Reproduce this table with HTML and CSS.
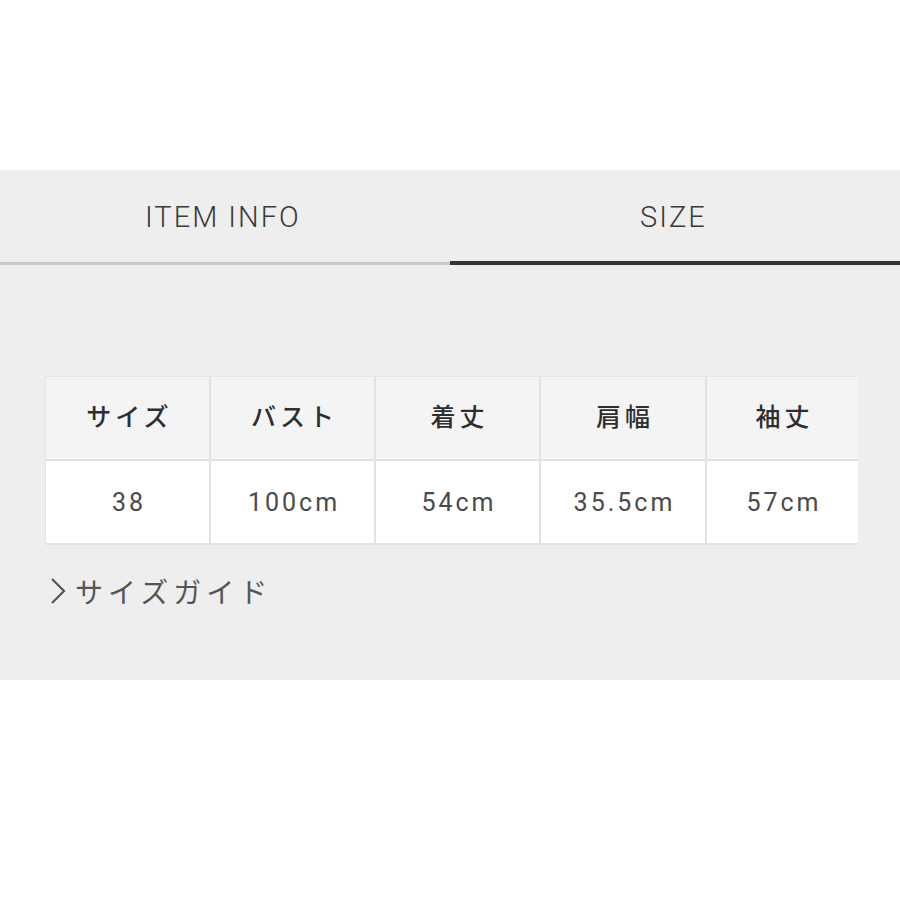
FILE: index.html
```html
<!DOCTYPE html>
<html lang="ja">
<head>
<meta charset="utf-8">
<link rel="stylesheet" href="styles.css">
</head>
<body>
<div class="top"></div>
<section class="panel">
  <div class="tabs">
    <div class="tab">ITEM INFO</div>
    <div class="tab active">SIZE</div>
  </div>
  <div class="content">
    <div class="table">
      <div class="cell head">サイズ</div>
      <div class="cell head">バスト</div>
      <div class="cell head">着丈</div>
      <div class="cell head">肩幅</div>
      <div class="cell head last">袖丈</div>
      <div class="cell data">38</div>
      <div class="cell data">100cm</div>
      <div class="cell data">54cm</div>
      <div class="cell data">35.5cm</div>
      <div class="cell data last">57cm</div>
    </div>
    <a class="guide" href="#"><svg class="chev" width="18" height="28" viewBox="0 0 18 28"><path d="M3 2 L15 14 L3 26" fill="none" stroke="#555" stroke-width="2.2"/></svg><span>サイズガイド</span></a>
  </div>
</section>
</body>
</html>
```
FILE: styles.css
```css
* { box-sizing: border-box; }
body {
  margin: 0;
  background: #fff;
  font-family: Roboto, "Noto Sans CJK JP", sans-serif;
}
.top { height: 170px; }
.panel {
  background: #eeeeee;
  height: 510px;
}
.tabs {
  display: grid;
  grid-template-columns: 450px 450px;
  height: 95px;
}
.tab {
  display: flex;
  align-items: center;
  font-family: Roboto, sans-serif;
  font-weight: 300;
  font-size: 29px;
  letter-spacing: 2px;
  color: #3a3a3a;
  border-bottom: 3px solid #c9c9c9;
  padding-top: 2px;
}
.tabs .tab:first-child { justify-content: flex-start; padding-left: 145px; }
.tabs .tab.active {
  justify-content: flex-start;
  padding-left: 190px;
  border-bottom: 4px solid #333;
}
.content {
  padding: 111px 0 0 45px;
}
.table {
  display: grid;
  grid-template-columns: 165px 165px 165px 166px 151px;
  grid-template-rows: 84px 84px;
  width: 812px;
  border-top: 1px solid #e4e4e4;
  border-left: 1px solid #e4e4e4;
}
.cell {
  display: flex;
  align-items: center;
  justify-content: center;
  border-right: 2px solid #e2e2e2;
  border-bottom: 2px solid #e2e2e2;
}
.cell.last { border-right: 0; }
.head {
  background: #f5f4f5;
  font-family: "Noto Sans CJK JP", sans-serif;
  font-weight: 500;
  font-size: 25px;
  letter-spacing: 4px;
  color: #2e2e2e;
  padding-left: 4px;
  padding-bottom: 7px;
}
.data {
  background: #fff;
  font-family: Roboto, sans-serif;
  font-size: 25px;
  letter-spacing: 3px;
  color: #4a4a4a;
  padding-left: 3px;
}
.guide {
  display: inline-flex;
  align-items: center;
  margin-top: 26px;
  margin-left: 4px;
  text-decoration: none;
  color: #555;
  font-family: "Noto Sans CJK JP", sans-serif;
  font-size: 28px;
  letter-spacing: 5px;
}
.chev { margin-right: 8px; }
```
